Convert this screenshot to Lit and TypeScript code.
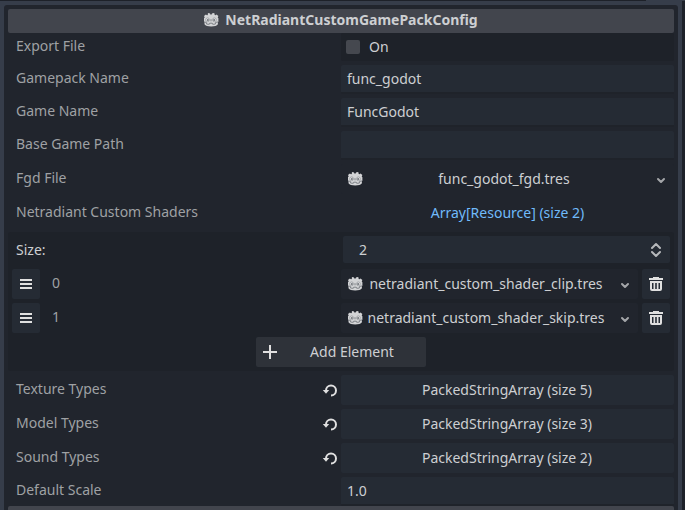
import { LitElement, html, css, svg, nothing, type TemplateResult } from "lit";
import { customElement } from "lit/decorators.js";

const godotIcon = html`<svg class="icon" width="16" height="16" viewBox="0 0 16 16">
  <path fill="#d3d4d6" d="M5.600 1 7 1.500 7.300 2.600h1.400L9 1.500l1.400-.5 1.200.6v1.300l.8.300 1.100-.6 1.900 1.500-.7 1.300.7.800v3.500l-.5.300v2.300c-1 1.500-3.300 2.200-6.700 2.200s-5.700-.7-6.700-2.200v-2.300l-.5-.3V6.200l.7-.8-.7-1.300 1.900-1.500 1.100.6.8-.3V1.600z"/>
  <path fill="none" stroke="#777a80" stroke-width=".9" d="M1 10 3.300 10.300l.4 1.800 2.600.2.400-1.100h2.600l.4 1.100 2.600-.2.400-1.800L15 10"/>
  <circle cx="4.600" cy="7.800" r="1.900" fill="#e4e4e5" stroke="#85888d" stroke-width=".6"/>
  <circle cx="11.400" cy="7.800" r="1.900" fill="#e4e4e5" stroke="#85888d" stroke-width=".6"/>
  <circle cx="4.900" cy="8" r="1" fill="#70747a"/>
  <circle cx="11.100" cy="8" r="1" fill="#70747a"/>
  <path stroke="#777a80" stroke-width=".9" d="M8 7.200v2.100"/>
</svg>`;

const stroked = (body: TemplateResult, width: number) => html`<svg class="icon" width="16" height="16"
  viewBox="0 0 16 16" fill="none" stroke="currentColor" stroke-width=${width}>${body}</svg>`;

const menuIcon = stroked(svg`<path d="M2 4h12M2 8h12M2 12h12"/>`, 2);
const plusIcon = stroked(svg`<path d="M8 1v14M1 8h14"/>`, 2);
const chevronIcon = html`<svg class="icon" width="12" height="12" viewBox="0 0 12 12" fill="none"
  stroke="currentColor" stroke-width="2" stroke-linecap="round" stroke-linejoin="round"><path d="M3 5l3 3 3-3"/></svg>`;
const updownIcon = html`<svg class="icon" width="16" height="16" viewBox="0 0 16 16" fill="none"
  stroke="currentColor" stroke-width="2" stroke-linecap="round" stroke-linejoin="round"><path d="M4 6l4-4 4 4M4 10l4 4 4-4"/></svg>`;
const revertIcon = html`<svg class="icon" width="16" height="16" viewBox="0 0 16 16">
  <path fill="none" stroke="currentColor" stroke-width="2" d="M4 8.500a5 5 0 1 1 5 5"/>
  <path fill="currentColor" d="M.8 8h6.400L4 11.700z"/></svg>`;
const trashIcon = html`<svg class="icon" width="16" height="16" viewBox="0 0 16 16">
  <path fill="currentColor" fill-rule="evenodd"
    d="M5 1h6v1h4v2H1V2h4zM2 5h12v8a2 2 0 0 1-2 2H4a2 2 0 0 1-2-2zM4 7v6h1.500V7zM7.200 7v6h1.600V7zM10.500 7v6H12V7z"/></svg>`;

@customElement("inspector-row")
class InspectorRow extends LitElement {
  static properties = { label: {}, revert: { type: Boolean } };
  declare label: string;
  declare revert: boolean;
  static styles = css`
    :host { display: grid; flex: none; grid-template-columns: 333px 333px; }
    .name { display: flex; align-items: center; justify-content: space-between; padding: 0 3px 4px 8px; color: #9fa1a4; white-space: nowrap; }
    .revert { display: flex; color: #e0e0e0; padding-top: 4px; }
    .icon { display: block; }
    ::slotted(*) { min-width: 0; }
  `;
  render() {
    return html`<div class="name"><span>${this.label}</span>${this.revert ? html`<span class="revert">${revertIcon}</span>` : nothing}</div><slot></slot>`;
  }
}

@customElement("app-root")
class AppRoot extends LitElement {
  static styles = css`
    :host { display: block; box-sizing: border-box; width: 685px; height: 510px; overflow: hidden;
      background: #1d2129; color: #cdcfd2; font: 14px/19px "Noto Sans", sans-serif; }
    .top { display: flex; justify-content: flex-end; height: 1px; }
    .top i { width: 39px; background: #363d4a; }
    .frame { width: 682px; height: 509px; box-sizing: border-box; background: #363d4a; padding: 4px 4px 0; }
    .panel { display: flex; flex-direction: column; gap: 4px; height: 505px; box-sizing: border-box; overflow: hidden;
      background: #21252d; border-radius: 3px 3px 0 0; padding: 4px 4px 0; }
    .icon { display: block; flex: none; }
    .title { display: flex; align-items: center; justify-content: center; gap: 6px; flex: none; height: 24px;
      box-sizing: border-box; padding: 0 1px 3px 0; border-radius: 2px; background: #42454d; font-weight: 700; margin-bottom: -4px; }
    .next { flex: none; height: 24px; border-radius: 2px 2px 0 0; background: #42454d; margin-top: -4px; }
    .h28 { height: 28px; }
    .h29 { height: 29px; }
    .h30 { height: 30px; }
    .control { display: flex; align-items: center; box-sizing: border-box; border-radius: 2px; white-space: nowrap; }
    .check { background: #1e2229; padding: 0 5px; gap: 9px; }
    .check span { padding-bottom: 2px; }
    .box { width: 14px; height: 14px; border-radius: 2px; background: #45484f; }
    .field { background: #252b34; border-bottom: 2px solid #1f232a; padding-left: 6px; }
    .button { background: #252b34; justify-content: center; padding: 0 1px 1px 0; }
    .link { color: #70bafa; justify-content: center; padding-bottom: 1px; }
    .resource { background: #21252d; padding-left: 6px; }
    .text { flex: 1; text-align: center; padding-bottom: 1px; }
    .resource .text { margin: 0 1px 0 0; }
    .arrow { width: 28px; display: flex; justify-content: center; padding: 2px 0 0 2px; box-sizing: border-box; color: #a4a6a9; }
    .array { flex: none; height: 139px; box-sizing: border-box; padding: 4px; border-radius: 3px; background: #1e2229;
      display: flex; flex-direction: column; gap: 4px; }
    .size { display: grid; grid-template-columns: 331px 327px; height: 27px; align-items: center; margin-bottom: 2px; }
    .size span { padding-left: 4px; }
    .spin { display: flex; align-items: center; justify-content: space-between; height: 27px; box-sizing: border-box;
      padding: 0 6px 0 12px; background: #252b34; border-radius: 2px; color: #b6b8bb; }
    .spin span { color: #cdcfd2; }
    .item { display: grid; grid-template-columns: 28px 301px 297px 28px; height: 30px; column-gap: 0; }
    .index { padding: 4px 0 0 12px; color: #9fa1a4; }
    .square { display: flex; align-items: center; justify-content: center; background: #252b34; border-radius: 2px; color: #e0e0e0; }
    .trash { margin-left: 4px; width: 28px; }
    .add { align-self: center; width: 170px; height: 30px; box-sizing: border-box; display: flex; align-items: center;
      padding-left: 6px; background: #2e3239; border-radius: 2px; }
    .add .icon { color: #e0e0e0; }
  `;

  private resource(name: string) {
    return html`${godotIcon}<span class="text">${name}</span><span class="arrow">${chevronIcon}</span>`;
  }

  render() {
    const lines = [["Gamepack Name", "func_godot"], ["Game Name", "FuncGodot"], ["Base Game Path", ""]];
    const items = ["netradiant_custom_shader_clip.tres", "netradiant_custom_shader_skip.tres"];
    const packed: [string, number][] = [["Texture Types", 5], ["Model Types", 3], ["Sound Types", 2]];
    return html`
      <div class="top"><i></i></div>
      <div class="frame"><div class="panel">
        <div class="title">${godotIcon}<span>NetRadiantCustomGamePackConfig</span></div>
        <inspector-row class="h28" label="Export File"><div class="control check"><i class="box"></i><span>On</span></div></inspector-row>
        ${lines.map(([k, v]) => html`<inspector-row class="h29" label=${k}><div class="control field">${v}</div></inspector-row>`)}
        <inspector-row class="h30" label="Fgd File"><div class="control resource">${this.resource("func_godot_fgd.tres")}</div></inspector-row>
        <inspector-row class="h30" label="Netradiant Custom Shaders"><div class="control link">Array[Resource] (size 2)</div></inspector-row>
        <div class="array">
          <div class="size"><span>Size:</span><div class="spin"><span>2</span>${updownIcon}</div></div>
          ${items.map((name, i) => html`<div class="item">
            <div class="square">${menuIcon}</div><span class="index">${i}</span>
            <div class="control resource">${this.resource(name)}</div>
            <div class="square trash">${trashIcon}</div></div>`)}
          <div class="add">${plusIcon}<span class="text">Add Element</span></div>
        </div>
        ${packed.map(([k, n]) => html`<inspector-row class="h30" label=${k} revert><div class="control button">PackedStringArray (size ${n})</div></inspector-row>`)}
        <inspector-row class="h29" label="Default Scale"><div class="control field">1.0</div></inspector-row>
        <div class="next"></div>
      </div></div>`;
  }
}
